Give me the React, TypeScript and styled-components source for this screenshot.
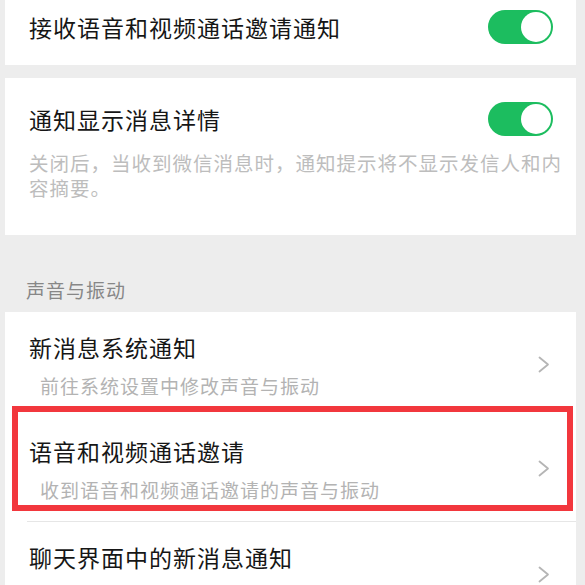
import styled, { createGlobalStyle } from "styled-components";

const GlobalStyle = createGlobalStyle`
  * { box-sizing: border-box; }
  body {
    margin: 0;
    background: #ededed;
    font-family: "Noto Sans CJK SC", "Noto Sans", sans-serif;
  }
`;

const color = {
  page: "#ededed",
  title: "#161616",
  sub: "#b3b3b3",
  desc: "#bdbdbd",
  header: "#878787",
  green: "#1cbd5f",
  line: "#e6e6e6",
  red: "#f2373d",
};

interface SwitchProps {
  on: boolean;
}

const Switch = ({ on }: SwitchProps) => (
  <SwitchTrack $on={on}>
    <SwitchKnob />
  </SwitchTrack>
);

const Chevron = () => (
  <svg width="12" height="17" viewBox="0 0 12 17" fill="none">
    <polyline
      points="1.5,1.5 10,8.5 1.5,15.5"
      stroke="#b5b5b5"
      strokeWidth="1.8"
      strokeLinecap="round"
      strokeLinejoin="round"
    />
  </svg>
);

const links = [
  { title: "新消息系统通知", sub: "前往系统设置中修改声音与振动" },
  { title: "语音和视频通话邀请", sub: "收到语音和视频通话邀请的声音与振动", marked: true },
  { title: "聊天界面中的新消息通知", sub: "" },
];

const App = () => {
  return (
    <Page>
      <GlobalStyle />
      <Card $bottom={11}>
        <ToggleRow>
          <Title>接收语音和视频通话邀请通知</Title>
          <Switch on />
        </ToggleRow>
      </Card>

      <Card $top={14} $bottom={35}>
        <ToggleRow>
          <Title>通知显示消息详情</Title>
          <Switch on />
        </ToggleRow>
        <Description>
          关闭后，当收到微信消息时，通知提示将不显示发信人和内容摘要。
        </Description>
      </Card>

      <SectionHeader>声音与振动</SectionHeader>

      <Card>
        {links.map((item, idx) => (
          <div key={idx}>
            {/* the red mark covers the line above the marked row */}
            {idx > 0 && !item.marked && <Divider />}
            <LinkRow $tall={!!item.marked}>
              <LinkText>
                <Title>{item.title}</Title>
                {item.sub && <Subtitle>{item.sub}</Subtitle>}
              </LinkText>
              <Chevron />
              {item.marked && <Highlight />}
            </LinkRow>
          </div>
        ))}
      </Card>
    </Page>
  );
};

export default App;

const Page = styled.div`
  min-height: 585px;
  padding: 0 9px 0 5px;
  background: ${color.page};
  overflow: hidden;
`;

const Card = styled.section<{ $top?: number; $bottom?: number }>`
  background: #fff;
  padding-top: ${({ $top }) => $top ?? 0}px;
  padding-bottom: ${({ $bottom }) => $bottom ?? 0}px;

  & + & {
    margin-top: 13px;
  }
`;

const ToggleRow = styled.div`
  display: flex;
  align-items: center;
  justify-content: space-between;
  height: 54px;
  padding: 0 23px 0 24px;
`;

const Title = styled.div`
  font-size: 23px;
  line-height: 30px;
  letter-spacing: 1px;
  color: ${color.title};
  white-space: nowrap;
`;

const Description = styled.p`
  margin: 4px 0 0;
  padding: 0 12px 0 24px;
  font-size: 19.5px;
  line-height: 25px;
  letter-spacing: 1px;
  color: ${color.desc};
`;

const SwitchTrack = styled.div<{ $on: boolean }>`
  display: flex;
  align-items: center;
  justify-content: ${({ $on }) => ($on ? "flex-end" : "flex-start")};
  width: 65px;
  height: 34px;
  padding: 2px;
  border-radius: 17px;
  background: ${({ $on }) => ($on ? color.green : "#e5e5e5")};
`;

const SwitchKnob = styled.span`
  width: 30px;
  height: 30px;
  border-radius: 50%;
  background: #fff;
`;

const SectionHeader = styled.h3`
  margin: 0;
  height: 77px;
  padding: 43px 0 0 21px;
  font-size: 19px;
  font-weight: 400;
  line-height: 24px;
  letter-spacing: 1px;
  color: ${color.header};
`;

const Divider = styled.div`
  height: 1px;
  margin-left: 22px;
  background: ${color.line};
`;

const LinkRow = styled.div<{ $tall: boolean }>`
  position: relative;
  display: flex;
  align-items: center;
  justify-content: space-between;
  height: ${({ $tall }) => ($tall ? 105 : 104)}px;
  padding: 0 26px 0 24px;
`;

const LinkText = styled.div`
  display: flex;
  flex-direction: column;
  gap: 12px;
  align-self: flex-start;
  padding-top: 20px;
`;

const Subtitle = styled.div`
  padding-left: 11px;
  font-size: 19px;
  line-height: 24px;
  letter-spacing: 1px;
  color: ${color.sub};
  white-space: nowrap;
`;

const Highlight = styled.div`
  position: absolute;
  top: -10px;
  left: 7px;
  right: 3px;
  height: 105px;
  border: 6px solid ${color.red};
  pointer-events: none;
`;
